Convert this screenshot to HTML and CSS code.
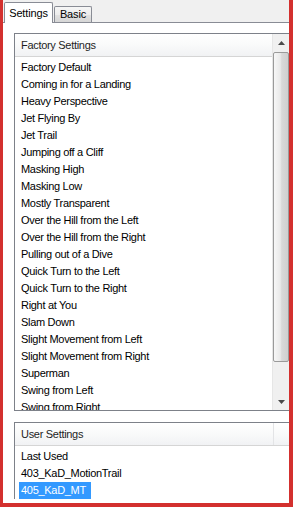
FILE: index.html
```html
<!DOCTYPE html>
<html>
<head>
<meta charset="utf-8">
<link rel="stylesheet" href="styles.css">
</head>
<body>
<div class="window">
  <div class="tabstrip">
    <div class="tab active">Settings</div>
    <div class="tab">Basic</div>
  </div>
  <div class="panel">
    <div class="box factory">
      <div class="lv">
        <div class="lv-header"><div class="hcell">Factory Settings</div></div>
        <div class="items">
          <div class="item"><span>Factory Default</span></div>
          <div class="item"><span>Coming in for a Landing</span></div>
          <div class="item"><span>Heavy Perspective</span></div>
          <div class="item"><span>Jet Flying By</span></div>
          <div class="item"><span>Jet Trail</span></div>
          <div class="item"><span>Jumping off a Cliff</span></div>
          <div class="item"><span>Masking High</span></div>
          <div class="item"><span>Masking Low</span></div>
          <div class="item"><span>Mostly Transparent</span></div>
          <div class="item"><span>Over the Hill from the Left</span></div>
          <div class="item"><span>Over the Hill from the Right</span></div>
          <div class="item"><span>Pulling out of a Dive</span></div>
          <div class="item"><span>Quick Turn to the Left</span></div>
          <div class="item"><span>Quick Turn to the Right</span></div>
          <div class="item"><span>Right at You</span></div>
          <div class="item"><span>Slam Down</span></div>
          <div class="item"><span>Slight Movement from Left</span></div>
          <div class="item"><span>Slight Movement from Right</span></div>
          <div class="item"><span>Superman</span></div>
          <div class="item"><span>Swing from Left</span></div>
          <div class="item"><span>Swing from Right</span></div>
        </div>
      </div>
      <div class="scrollbar">
        <div class="sb-btn">
          <svg width="7" height="4" viewBox="0 0 7 4"><polygon points="3.5,0 7,4 0,4" fill="#4a4a4a"/></svg>
        </div>
        <div class="thumb"></div>
        <div class="track"></div>
        <div class="sb-btn">
          <svg width="7" height="4" viewBox="0 0 7 4"><polygon points="0,0 7,0 3.5,4" fill="#4a4a4a"/></svg>
        </div>
      </div>
    </div>
    <div class="box user">
      <div class="lv">
        <div class="lv-header">
          <div class="hcell grow">User Settings</div>
          <div class="hcell rest"></div>
        </div>
        <div class="items">
          <div class="item"><span>Last Used</span></div>
          <div class="item"><span>403_KaD_MotionTrail</span></div>
          <div class="item selected"><span>405_KaD_MT</span></div>
        </div>
      </div>
    </div>
  </div>
</div>
</body>
</html>
```

FILE: styles.css
```css
html, body {
  margin: 0;
  padding: 0;
}
body {
  font-family: "Liberation Sans", Arial, sans-serif;
  font-size: 11px;
  letter-spacing: -0.3px;
  color: #000;
}
.window {
  width: 293px;
  height: 507px;
  box-sizing: border-box;
  border-left: 3px solid #d3302e;
  border-right: 4px solid #d3302e;
  border-bottom: 4px solid #d3302e;
  background: #f0f0f0;
  display: flex;
  flex-direction: column;
  overflow: hidden;
}
.tabstrip {
  height: 22px;
  display: flex;
  align-items: flex-end;
  padding-left: 1px;
  flex: none;
}
.tab {
  box-sizing: border-box;
  width: 38px;
  height: 16px;
  margin-left: 1px;
  border: 1px solid #898c95;
  border-bottom: none;
  border-radius: 2px 2px 0 0;
  background: linear-gradient(#f6f6f6, #ededed 50%, #e2e2e2 51%, #d6d6d6);
  text-align: center;
  line-height: 15px;
  letter-spacing: -0.15px;
}
.tab.active {
  width: 49px;
  height: 21px;
  margin-left: 0;
  margin-bottom: -1px;
  background: #fff;
  position: relative;
  z-index: 1;
  line-height: 20px;
}
.panel {
  flex: 1;
  border-top: 1px solid #898c95;
  background: #fff;
  padding: 10px 0 0 11px;
  display: flex;
  flex-direction: column;
  min-height: 0;
}
.box {
  border: 1px solid #7d8189;
  border-right: none;
  display: flex;
  background: #fff;
  overflow: hidden;
}
.factory {
  height: 378px;
  box-sizing: border-box;
  flex: none;
}
.user {
  margin-top: 11px;
  flex: 1;
  border-bottom: none;
  margin-bottom: 4px;
}
.lv {
  flex: 1;
  display: flex;
  flex-direction: column;
  min-width: 0;
}
.lv-header {
  height: 22px;
  border-bottom: 1px solid #d5d5d5;
  background: linear-gradient(#ffffff, #f9fafa 50%, #f1f2f4);
  display: flex;
  flex: none;
}
.hcell {
  line-height: 22px;
  padding-left: 6px;
  color: #1e1e1e;
}
.hcell.grow {
  width: 252px;
  border-right: 1px solid #e3e4e6;
}
.hcell.rest {
  flex: 1;
  padding: 0;
}
.items {
  padding-top: 2px;
}
.item {
  height: 17px;
  line-height: 17px;
  padding-left: 4px;
  white-space: nowrap;
}
.item span {
  display: inline-block;
  padding: 0 3px 0 2px;
}
.item.selected span {
  background: #3399ff;
  color: #fff;
  padding-right: 5px;
}
.scrollbar {
  width: 16px;
  flex: none;
  display: flex;
  flex-direction: column;
  background: #f0f0f0;
  border-left: 1px solid #e6e6e6;
}
.sb-btn {
  height: 17px;
  display: flex;
  align-items: center;
  justify-content: center;
  flex: none;
}
.thumb {
  height: 310px;
  box-sizing: border-box;
  margin: 1px 0 0 0;
  border: 1px solid #9a9a9a;
  border-radius: 2px;
  background: linear-gradient(to right, #f7f7f7, #e9e9e9 45%, #d9d9d9 55%, #cfcfcf);
  flex: none;
}
.track {
  flex: 1;
}
```
